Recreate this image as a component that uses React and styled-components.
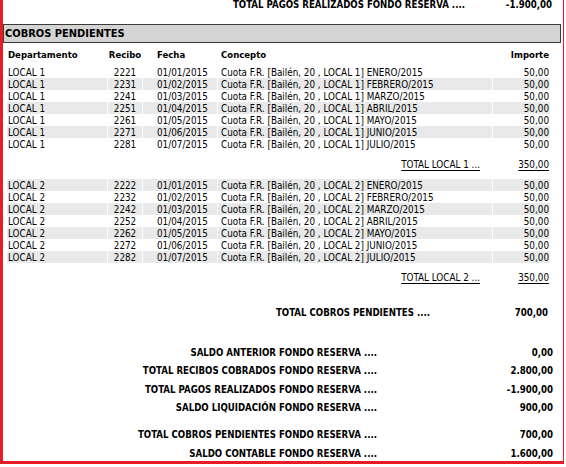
import React from 'react';
import styled, { createGlobalStyle } from 'styled-components';

const GlobalStyle = createGlobalStyle`
  html, body {
    margin: 0;
    padding: 0;
    background: #fff;
  }
  body {
    font-family: "DejaVu Sans Condensed", "DejaVu Sans", sans-serif;
    color: #000;
  }
`;

const Frame = styled.div`
  box-sizing: border-box;
  width: 564px;
  height: 464px;
  border-left: 3px solid #e81c24;
  border-right: 1px solid #e81c24;
  border-bottom: 3px solid #e81c24;
  overflow: hidden;
  display: flex;
  flex-direction: column;
`;

const SummaryRow = styled.div`
  display: flex;
  flex-shrink: 0;
  height: ${(p) => p.h || 18}px;
  align-items: center;
  font-size: 9.6px;
  font-weight: bold;
  white-space: nowrap;
`;
const SummaryLabel = styled.div`
  text-align: right;
`;
const SummaryValue = styled.div`
  text-align: right;
`;

const Spacer = styled.div`
  flex-shrink: 0;
  height: ${(p) => p.h}px;
`;

const SectionBar = styled.div`
  flex-shrink: 0;
  box-sizing: border-box;
  width: 558px;
  height: 19px;
  margin-top: ${(p) => p.mt}px;
  background: #d4d4d4;
  border: 1px solid #3a3a3a;
  display: flex;
  align-items: center;
  padding-left: 1px;
  font-size: 11px;
  font-weight: bold;
`;

const Table = styled.div`
  display: flex;
  flex-direction: column;
  margin-left: 4px;
  flex-shrink: 0;
`;

const Row = styled.div`
  display: grid;
  grid-template-columns: 100px 34px 74px 274px 57px;
  column-gap: 1px;
  height: ${(p) => p.h || 12}px;
  font-size: ${(p) => (p.head ? 9.5 : 9.8)}px;
  font-weight: ${(p) => (p.head ? 'bold' : 'normal')};
  white-space: nowrap;
`;

const Cell = styled.div`
  display: flex;
  align-items: center;
  background: ${(p) => (p.shade ? '#e9e9e9' : 'transparent')};
  justify-content: ${(p) => p.align || 'flex-start'};
  padding-left: ${(p) => p.pl || 0}px;
  padding-right: ${(p) => p.pr || 0}px;
  overflow: hidden;
`;

const TotalRow = styled.div`
  display: flex;
  height: 29px;
  align-items: center;
  font-size: 9.8px;
  white-space: nowrap;
`;
const TotalText = styled.span`
  text-decoration: underline;
  text-underline-offset: 2px;
  text-align: right;
  width: ${(p) => p.w}px;
`;

const months = ['ENERO', 'FEBRERO', 'MARZO', 'ABRIL', 'MAYO', 'JUNIO', 'JULIO'];

const groups = [
  { local: 'LOCAL 1', base: 2221, shadeOdd: false },
  { local: 'LOCAL 2', base: 2222, shadeOdd: true },
];

function Summary({ label, value, labelEnd, valueEnd, h }) {
  return (
    <SummaryRow h={h}>
      <SummaryLabel style={{ width: labelEnd - 3 }}>{label}</SummaryLabel>
      <SummaryValue style={{ width: valueEnd - labelEnd }}>{value}</SummaryValue>
    </SummaryRow>
  );
}

export default function App() {
  return (
    <>
      <GlobalStyle />
      <Frame>
        <SummaryRow h={12} style={{ marginTop: -2 }}>
          <SummaryLabel style={{ width: 462 }}>TOTAL PAGOS REALIZADOS FONDO RESERVA ....</SummaryLabel>
          <SummaryValue style={{ width: 87 }}>-1.900,00</SummaryValue>
        </SummaryRow>
        <SectionBar mt={14}>COBROS PENDIENTES</SectionBar>
        <Table>
          <Row head h={14} style={{ marginTop: 4, marginBottom: 5 }}>
            <Cell pl={1}>Departamento</Cell>
            <Cell align="center">Recibo</Cell>
            <Cell pl={14}>Fecha</Cell>
            <Cell pl={3}>Concepto</Cell>
            <Cell align="flex-end" pr={1}>Importe</Cell>
          </Row>
          {groups.map((g) => (
            <React.Fragment key={g.local}>
              {months.map((m, i) => {
                const shade = g.shadeOdd ? i % 2 === 0 : i % 2 === 1;
                return (
                  <Row key={m}>
                    <Cell shade={shade} pl={1}>{g.local}</Cell>
                    <Cell shade={shade} align="center">{g.base + i * 10}</Cell>
                    <Cell shade={shade} pl={14}>{`01/0${i + 1}/2015`}</Cell>
                    <Cell shade={shade} pl={3}>{`Cuota F.R. [Bailén, 20 , ${g.local}] ${m}/2015`}</Cell>
                    <Cell shade={shade} align="flex-end" pr={1}>50,00</Cell>
                  </Row>
                );
              })}
              <TotalRow>
                <TotalText w={473}>{`TOTAL ${g.local} ...`}</TotalText>
                <TotalText w={69}>350,00</TotalText>
              </TotalRow>
            </React.Fragment>
          ))}
        </Table>
        <SummaryRow h={18} style={{ marginTop: 11 }}>
          <SummaryLabel style={{ width: 427 }}>TOTAL COBROS PENDIENTES ....</SummaryLabel>
          <SummaryValue style={{ width: 118 }}>700,00</SummaryValue>
        </SummaryRow>
        <Spacer h={22} />
        <Summary label="SALDO ANTERIOR FONDO RESERVA ...." value="0,00" labelEnd={377} valueEnd={553} />
        <Summary label="TOTAL RECIBOS COBRADOS FONDO RESERVA ...." value="2.800,00" labelEnd={377} valueEnd={553} h={19} />
        <Summary label="TOTAL PAGOS REALIZADOS FONDO RESERVA ...." value="-1.900,00" labelEnd={377} valueEnd={553} />
        <Summary label="SALDO LIQUIDACIÓN FONDO RESERVA ...." value="900,00" labelEnd={377} valueEnd={553} />
        <Spacer h={9} />
        <Summary label="TOTAL COBROS PENDIENTES FONDO RESERVA ...." value="700,00" labelEnd={377} valueEnd={553} h={19} />
        <Summary label="SALDO CONTABLE FONDO RESERVA ...." value="1.600,00" labelEnd={377} valueEnd={553} />
      </Frame>
    </>
  );
}
